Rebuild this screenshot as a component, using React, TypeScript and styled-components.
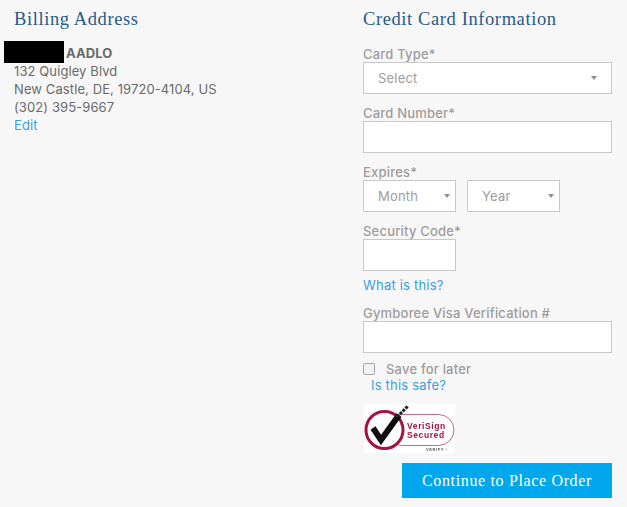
import styled, { createGlobalStyle } from "styled-components";

const GlobalStyle = createGlobalStyle`
  html, body {
    margin: 0;
    background: #f7f7f7;
  }

  body {
    font-family: Inter, "Liberation Sans", sans-serif;
    letter-spacing: 0.2px;
  }
`;

const Page = styled.div`
  width: 627px;
  height: 507px;
  overflow: hidden;
  display: flex;
  box-sizing: border-box;
  padding-top: 8px;
`;

const BillingColumn = styled.section`
  width: 363px;
  padding-left: 14px;
  box-sizing: border-box;
`;

const CardColumn = styled.section`
  width: 249px;
  display: flex;
  flex-direction: column;
`;

const Heading = styled.h2`
  margin: 0;
  height: 23px;
  font-family: "Liberation Serif", serif;
  font-weight: 400;
  font-size: 18.5px;
  letter-spacing: 0.6px;
  line-height: 23px;
  color: #2a5a86;
  white-space: nowrap;
`;

const AddressBlock = styled.div`
  margin-top: 13px;
  font-size: 13px;
  line-height: 18px;
  letter-spacing: 0.1px;
  color: #6a6a6a;
`;

const NameLine = styled.div`
  position: relative;
  padding-left: 52px;
  font-weight: 700;
`;

const Redaction = styled.span`
  position: absolute;
  left: -10px;
  top: -3px;
  width: 60px;
  height: 22px;
  background: #000;
`;

const TextLink = styled.a<{ $indent?: number; $gap?: number }>`
  display: block;
  margin-left: ${p => p.$indent ?? 0}px;
  margin-top: ${p => p.$gap ?? 0}px;
  font-size: 13px;
  line-height: 18px;
  color: #3a9fe0;
`;

const Label = styled.label<{ $gap?: number }>`
  display: block;
  margin-top: ${p => p.$gap ?? 10}px;
  margin-bottom: -1px;
  font-size: 13px;
  line-height: 18px;
  font-weight: 500;
  color: #a09c9c;
  white-space: nowrap;
`;

const Field = styled.div<{ $width?: number }>`
  width: ${p => p.$width ?? 249}px;
  height: 32px;
  box-sizing: border-box;
  background: #fff;
  border: 1px solid #c8c8c8;
`;

const SelectField = styled(Field)<{ $caretInset?: number }>`
  display: flex;
  align-items: center;
  justify-content: space-between;
  padding: 0 ${p => p.$caretInset ?? 5}px 0 14px;
  font-size: 13px;
  color: #a09c9c;
`;

const Caret = styled.span`
  width: 0;
  height: 0;
  border-left: 3.5px solid transparent;
  border-right: 3.5px solid transparent;
  border-top: 4px solid #8f8f8f;
`;

const FieldRow = styled.div`
  display: flex;
  gap: 11px;
`;

const SaveRow = styled.div`
  display: flex;
  align-items: center;
  gap: 11px;
  margin-top: 7px;
  height: 18px;
  font-size: 13px;
  font-weight: 500;
  color: #a09c9c;
`;

const CheckBox = styled.span`
  width: 10px;
  height: 10px;
  background: #f1f1f1;
  border: 1px solid #a8a8a8;
  border-radius: 2px;
`;

const Seal = styled.svg`
  display: block;
  margin-top: 10px;
  margin-left: 1px;
`;

const ButtonRow = styled.div`
  display: flex;
  justify-content: flex-end;
  margin-top: 10px;
`;

const ContinueButton = styled.button`
  width: 210px;
  height: 35px;
  padding: 0;
  border: 0;
  background: #00a7ec;
  color: #fff;
  font-family: "Liberation Serif", serif;
  font-size: 16px;
  letter-spacing: 0.65px;
`;

const VeriSignSeal = () => (
  <Seal width="91" height="49" viewBox="0 0 91 49">
    <defs>
      <filter id="soft">
        <feGaussianBlur stdDeviation="0.4" />
      </filter>
    </defs>
    <rect width="91" height="49" fill="#fff" />
    <g filter="url(#soft)">
      <rect x="22" y="10.5" width="68" height="31" rx="15.5" fill="#fff" stroke="#c06a85" strokeWidth="1" />
      <circle cx="20.5" cy="26" r="18.5" fill="#fff" stroke="#a3123f" strokeWidth="3" />
      <path d="M9 24 L17 36 L35 11" fill="none" stroke="#111" strokeWidth="6" />
      <path d="M33 13 L44 2" stroke="#222" strokeWidth="3" strokeDasharray="3 1" />
      <text x="43" y="25" fontFamily="Liberation Sans" fontWeight="700" fontSize="8.5" letterSpacing="0.6" fill="#a3123f">VeriSign</text>
      <text x="43" y="34" fontFamily="Liberation Sans" fontWeight="700" fontSize="8.5" letterSpacing="0.6" fill="#a3123f">Secured</text>
      <text x="62" y="47" fontFamily="Liberation Sans" fontWeight="700" fontSize="4" letterSpacing="0.6" fill="#555">VERIFY ›</text>
    </g>
  </Seal>
);

const App = () => (
  <>
    <GlobalStyle />
    <Page>
      <BillingColumn>
        <Heading>Billing Address</Heading>
        <AddressBlock>
          <NameLine>
            <Redaction />
            AADLO
          </NameLine>
          <div>132 Quigley Blvd</div>
          <div>New Castle, DE, 19720-4104, US</div>
          <div>(302) 395-9667</div>
          <TextLink>Edit</TextLink>
        </AddressBlock>
      </BillingColumn>

      <CardColumn>
        <Heading>Credit Card Information</Heading>

        <Label $gap={14}>Card Type*</Label>
        <SelectField $caretInset={14}>
          Select
          <Caret />
        </SelectField>

        <Label>Card Number*</Label>
        <Field />

        <Label>Expires*</Label>
        <FieldRow>
          <SelectField $width={93}>
            Month
            <Caret />
          </SelectField>
          <SelectField $width={93}>
            Year
            <Caret />
          </SelectField>
        </FieldRow>

        <Label>Security Code*</Label>
        <Field $width={93} />

        <TextLink $gap={5}>What is this?</TextLink>

        <Label>Gymboree Visa Verification #</Label>
        <Field />

        <SaveRow>
          <CheckBox />
          Save for later
        </SaveRow>
        <TextLink $indent={8} $gap={-2}>Is this safe?</TextLink>

        <VeriSignSeal />

        <ButtonRow>
          <ContinueButton>Continue to Place Order</ContinueButton>
        </ButtonRow>
      </CardColumn>
    </Page>
  </>
);

export default App;
